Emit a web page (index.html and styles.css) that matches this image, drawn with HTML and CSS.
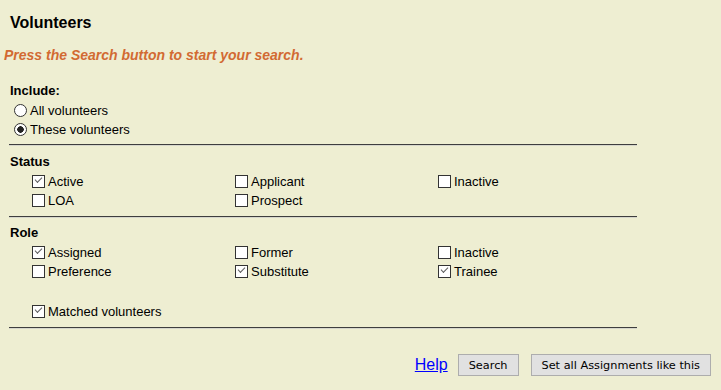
FILE: index.html
```html
<!DOCTYPE html>
<html lang="en">

<head>
    <meta charset="UTF-8">
    <meta name="viewport" content="width=device-width, initial-scale=1.0">
    <title>Volunteers</title>
    <link rel="stylesheet" href="styles.css">
</head>

<body>

    <h1 class="title">Volunteers</h1>
    <p class="hint">Press the Search button to start your search.</p>

    <div class="panel">
        <div class="group-label include-label">Include:</div>
        <div class="radios">
            <label class="radio-row"><input type="radio" name="include"> All volunteers</label>
            <label class="radio-row"><input type="radio" name="include" checked> These volunteers</label>
        </div>

        <hr>

        <div class="group-label">Status</div>
        <div class="options">
            <label class="opt"><input type="checkbox" checked>Active</label>
            <label class="opt"><input type="checkbox">Applicant</label>
            <label class="opt"><input type="checkbox">Inactive</label>
            <label class="opt"><input type="checkbox">LOA</label>
            <label class="opt"><input type="checkbox">Prospect</label>
        </div>

        <hr>

        <div class="group-label role-label">Role</div>
        <div class="options">
            <label class="opt"><input type="checkbox" checked>Assigned</label>
            <label class="opt"><input type="checkbox">Former</label>
            <label class="opt"><input type="checkbox">Inactive</label>
            <label class="opt"><input type="checkbox">Preference</label>
            <label class="opt"><input type="checkbox" checked>Substitute</label>
            <label class="opt"><input type="checkbox" checked>Trainee</label>
            <div class="opt spacer"></div>
            <label class="opt wide"><input type="checkbox" checked>Matched volunteers</label>
        </div>

        <hr>
    </div>

    <div class="actions">
        <a href="#" class="help">Help</a>
        <button type="button" class="btn">Search</button>
        <button type="button" class="btn">Set all Assignments like this</button>
    </div>

</body>

</html>
```

FILE: styles.css
```css
body {
    margin: 0;
    background-color: #eeeed2;
    font-family: "Liberation Sans", Arial, sans-serif;
    font-size: 13px;
    color: #000;
}

.title {
    margin: 0;
    padding: 14px 10px 0;
    font-size: 16px;
    line-height: 18px;
    font-weight: bold;
}

.hint {
    margin: 15px 0 0;
    padding-left: 4px;
    font-size: 14px;
    line-height: 16px;
    font-weight: bold;
    font-style: italic;
    color: #d26a32;
}

.panel {
    width: 628px;
    margin-left: 9px;
}

.group-label {
    padding-left: 1px;
    margin-top: 8px;
    font-weight: bold;
    line-height: 16px;
}

.include-label {
    margin-top: 20px;
}

.role-label {
    margin-top: 7px;
}

.radios {
    margin-top: 2px;
}

.radio-row {
    display: flex;
    align-items: center;
    height: 19px;
}

.radio-row input {
    appearance: none;
    width: 13px;
    height: 13px;
    margin: 0 3px 0 5px;
    border: 1px solid #333;
    border-radius: 50%;
    background: #fff;
    box-sizing: border-box;
}

.radio-row input:checked {
    background: radial-gradient(circle, #222 0, #222 3px, #fff 3.5px);
}

hr {
    height: 0;
    margin: 5px 0 0;
    border: 0;
    border-top: 1px solid #3e3e3e;
    border-bottom: 1px solid #d6d6cc;
}

.options {
    display: grid;
    grid-template-columns: 203px 203px 203px;
    margin: 2px 0 6px;
    padding-left: 23px;
}

.options + hr {
    margin-top: 0;
}

.opt {
    display: flex;
    align-items: center;
    height: 19px;
}

.opt.spacer {
    grid-column: 1 / -1;
    height: 21px;
}

.opt.wide {
    grid-column: 1 / 3;
}

.opt input {
    appearance: none;
    position: relative;
    width: 13px;
    height: 13px;
    margin: 0 3px 0 0;
    border: 1px solid #333;
    background: #fff;
    box-sizing: border-box;
}

.opt input:checked::after {
    content: "";
    position: absolute;
    left: 2px;
    top: 1px;
    width: 6px;
    height: 3px;
    border-left: 1.5px solid #5e5e5e;
    border-bottom: 1.5px solid #5e5e5e;
    transform: rotate(-45deg);
}

.actions {
    display: flex;
    justify-content: flex-end;
    align-items: center;
    margin-top: 25px;
    padding-right: 10px;
}

.help {
    margin-right: 10px;
    font-size: 16px;
    line-height: 18px;
    color: #0000ff;
}

.btn {
    height: 22px;
    margin-left: 12px;
    padding: 0 10px;
    border: 1px solid #adadad;
    background-color: #e1e1e1;
    font-family: "DejaVu Sans", sans-serif;
    font-size: 11.3px;
    color: #000;
}

.help + .btn {
    margin-left: 0;
}
```
